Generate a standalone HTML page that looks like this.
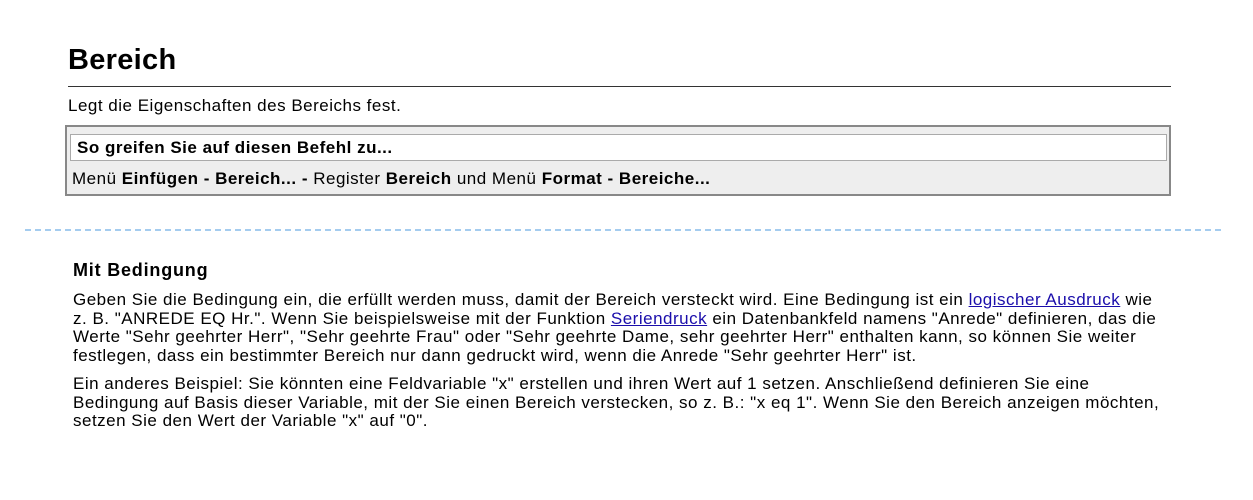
<!DOCTYPE html>
<html><head><meta charset="utf-8"><style>
body{margin:0;width:1253px;height:500px;background:#fff;font-family:"Liberation Sans",Arial,sans-serif;color:#000;position:relative;overflow:hidden}
.a{position:absolute;white-space:nowrap;font-size:17px;letter-spacing:0.5px}
h1{position:absolute;left:68px;top:44px;margin:0;font-size:29px;font-weight:bold;letter-spacing:0.3px}
.hr{position:absolute;left:68px;top:86px;width:1103px;height:1px;background:#333}
.box{position:absolute;left:65px;top:125px;width:1102px;height:67px;border:2px solid #888;background:#eee}
.inner{position:absolute;left:3px;top:7px;height:27px;border:1px solid #aaa;background:#fff;font-weight:bold;font-size:17px;letter-spacing:0.5px;line-height:26px;padding-left:6px;box-sizing:border-box;width:1097px}
.dash{position:absolute;left:25px;top:229px;width:1196px;height:0;border-top:2px dashed #a4ccef}
p{position:absolute;left:73px;margin:0;font-size:17px;letter-spacing:0.5px;line-height:18.5px;width:1096px}
a{color:#1a0dab;text-decoration:underline}
</style></head><body>
<h1>Bereich</h1>
<div class="hr"></div>
<div class="a" style="left:68px;top:96px">Legt die Eigenschaften des Bereichs fest.</div>
<div class="box">
<div class="inner">So greifen Sie auf diesen Befehl zu...</div>
<div class="a" style="left:5px;top:42px">Menü <b>Einfügen - Bereich... -</b> Register <b>Bereich</b> und Menü <b>Format - Bereiche...</b></div>
</div>
<div class="dash"></div>
<div class="a" style="left:73px;top:260px;font-size:18px;letter-spacing:0.8px;font-weight:bold">Mit Bedingung</div>
<p style="top:291px">Geben Sie die Bedingung ein, die erfüllt werden muss, damit der Bereich versteckt wird. Eine Bedingung ist ein <a>logischer Ausdruck</a> wie z. B. "ANREDE EQ Hr.". Wenn Sie beispielsweise mit der Funktion <a>Seriendruck</a> ein Datenbankfeld namens "Anrede" definieren, das die Werte "Sehr geehrter Herr", "Sehr geehrte Frau" oder "Sehr geehrte Dame, sehr geehrter Herr" enthalten kann, so können Sie weiter festlegen, dass ein bestimmter Bereich nur dann gedruckt wird, wenn die Anrede "Sehr geehrter Herr" ist.</p>
<p style="top:375px">Ein anderes Beispiel: Sie könnten eine Feldvariable "x" erstellen und ihren Wert auf 1 setzen. Anschließend definieren Sie eine Bedingung auf Basis dieser Variable, mit der Sie einen Bereich verstecken, so z. B.: "x eq 1". Wenn Sie den Bereich anzeigen möchten, setzen Sie den Wert der Variable "x" auf "0".</p>
</body></html>
